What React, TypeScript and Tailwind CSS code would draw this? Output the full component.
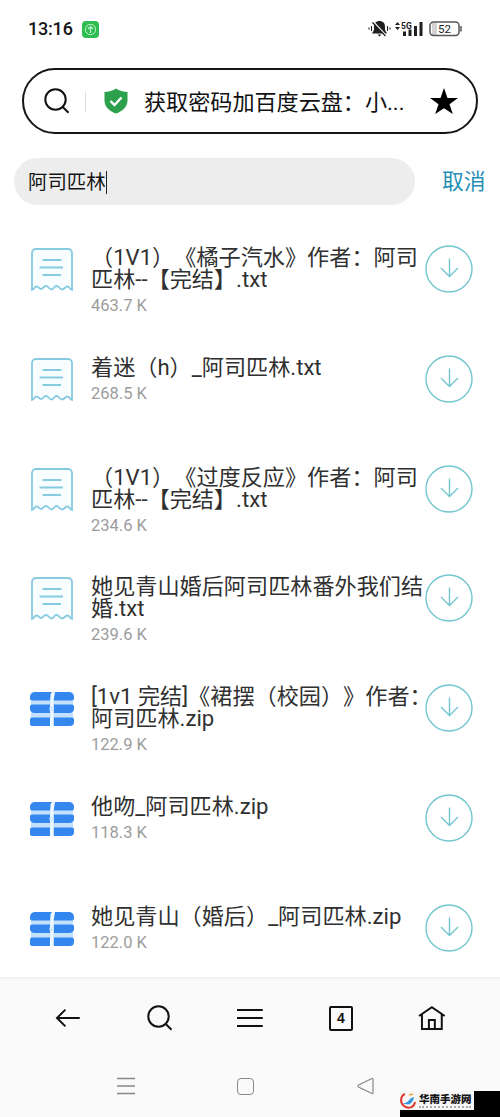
import { FC } from "react";

type FileItem = {
  lines: string[];
  size: string;
  kind: "txt" | "zip";
};

const files: FileItem[] = [
  {
    lines: ["（1V1）《橘子汽水》作者：阿司", "匹林--【完结】.txt"],
    size: "463.7 K",
    kind: "txt",
  },
  { lines: ["着迷（h）_阿司匹林.txt"], size: "268.5 K", kind: "txt" },
  {
    lines: ["（1V1）《过度反应》作者：阿司", "匹林--【完结】.txt"],
    size: "234.6 K",
    kind: "txt",
  },
  {
    lines: ["她见青山婚后阿司匹林番外我们结", "婚.txt"],
    size: "239.6 K",
    kind: "txt",
  },
  {
    lines: ["[1v1 完结]《裙摆（校园）》作者：", "阿司匹林.zip"],
    size: "122.9 K",
    kind: "zip",
  },
  { lines: ["他吻_阿司匹林.zip"], size: "118.3 K", kind: "zip" },
  { lines: ["她见青山（婚后）_阿司匹林.zip"], size: "122.0 K", kind: "zip" },
];

const SearchIcon: FC = () => (
  <svg width="26" height="26" viewBox="0 0 26 26" fill="none" stroke="#111" strokeWidth="2">
    <circle cx="11.5" cy="11.5" r="10.2" />
    <path d="M18.5 18.8l6 6" />
  </svg>
);

const TxtIcon: FC = () => (
  <svg width="42" height="44" viewBox="0 0 42 44" fill="none" stroke="#86cbe0" strokeWidth="1.8">
    <path
      d="M1 42V5a4 4 0 0 1 4-4h32a4 4 0 0 1 4 4v37c-2-.5-2.500-3.500-4.500-3.500-2.500 0-3 3-5.500 3s-3-3.500-5.500-3.500-2.500 3.500-5 3.500-3-3.500-5.500-3.500-3 3-5 3S8 38.500 5.500 38.500C3.500 38.500 3 41.500 1 42z"
      fill="#f8feff"
    />
    <path d="M11.500 12h19M8.500 19.500h23.500M11.500 27h18.500" />
  </svg>
);

const ZipIcon: FC = () => (
  <svg width="46" height="36" viewBox="0 0 46 36">
    <path d="M2 8h42v6H2zM2 21h42v6H2z" fill="#c3e1fc" />
    <g fill="#3587f0">
      <path d="M5 1h18l-2 8.500H3Q1 9.500 1 7.500V6Q1 2 5 1zM26 1h15q4 1 4 5v1.500q0 2-2 2H24.500z" />
      <path d="M3 13.500h18V22H5q-4-1-4-4v-2.500q0-2 2-2zM24.500 13.500H43q2 0 2 2V18q0 3-4 4H24.500z" />
      <path d="M3 26.500h18V35H3q-2 0-2-2v-4.500q0-2 2-2zM24.500 26.500H43q2 0 2 2V31q0 4-4 4H24.500z" />
    </g>
    <path d="M24 0l-2.500 3v33h3V3l1-3z" fill="#eef8ff" />
    <circle cx="22.700" cy="18" r="2.400" fill="#d3eaff" />
  </svg>
);

const DownloadIcon: FC = () => (
  <svg width="48" height="48" viewBox="0 0 48 48" fill="none" stroke="#73c6d0" strokeWidth="1.400">
    <circle cx="24" cy="24" r="23" />
    <path d="M24.500 13.500v18M16 23l8.500 8.500L33 23" />
  </svg>
);

const StatusBar: FC = () => (
  <header className="flex h-[68px] items-start justify-between pt-[19px] pr-[38px] pl-7">
    <div className="flex h-5 items-center gap-[10px]">
      <span className="w-[44px] text-[18px] font-medium leading-5 tracking-[-0.2px] whitespace-nowrap">13:16</span>
      <svg width="17" height="17" viewBox="0 0 17 17" fill="none">
        <rect width="17" height="17" rx="4" fill="#2fbd52" />
        <circle cx="8.500" cy="8.500" r="5.200" stroke="#c4f3cf" />
        <path d="M8.500 12V6M6 8l2.500-2.500L11 8" stroke="#c4f3cf" strokeWidth="1.200" />
      </svg>
    </div>

    <div className="flex h-5 items-center">
      <svg width="23" height="16" viewBox="0 0 23 16" fill="#202020">
        <path d="M11.500 0c3.600 0 5.500 2.300 5.500 5.500V9l2 3.500H4L6 9V5.500C6 2.300 7.900 0 11.500 0zM9.500 13.500h4l-2 2z" />
        <path d="M5.500 1l13 14" stroke="#fff" strokeWidth="1.800" />
        <path d="M4.500 1.500l13 13.500" stroke="#202020" strokeWidth="1.300" />
        <path d="M1 6.500v2M3.500 5v5M19.500 5v5M22 6.500v2" stroke="#202020" strokeWidth="1.100" />
      </svg>
      <svg className="ml-[4px]" width="28" height="16" viewBox="0 0 28 16" fill="#202020">
        <path d="M0 4l2.500-3L5 4zM0 6h5L2.500 9z" />
        <text x="6" y="7.600" fontFamily="Roboto, sans-serif" fontSize="8.500" fontWeight="700">
          5G
        </text>
        <path d="M8 10.500h3V15H8zM13.500 8.500h3V15h-3zM19 5h3v10h-3zM24.500 1h3v14h-3z" />
      </svg>
      <svg className="ml-[6px]" width="33" height="16" viewBox="0 0 33 16" fill="none">
        <path d="M3 2h5v12H3z" fill="#d3d3d3" />
        <rect x="1" y="1" width="29" height="13.500" rx="3.500" stroke="#555" strokeWidth="1.500" />
        <path d="M32 5v5.500" stroke="#555" strokeWidth="1.500" />
        <text x="9" y="12" fontFamily="Roboto, sans-serif" fontSize="11.500" fill="#222">
          52
        </text>
      </svg>
    </div>
  </header>
);

const AddressBar: FC = () => (
  <div className="mr-[22px] ml-[22px] flex h-[66px] items-center rounded-full border-2 border-[#151515] pr-[18px] pl-5">
    <SearchIcon />
    <span className="ml-[15px] h-[21px] w-px bg-[#dedede]" />
    <svg className="ml-[18px]" width="24" height="26" viewBox="0 0 24 26" fill="none">
      <path d="M12 .5q5 3.300 11.500 3.500v8.500C23.500 19 18 23.500 12 25.500 6 23.500.5 19 .5 12.500V4Q7 3.800 12 .5z" fill="#2ca04c" />
      <path d="M6.500 13l4 4 7-7.500" stroke="#fff" strokeWidth="2.400" />
    </svg>
    <span className="ml-4 w-[270px] pt-[2px] text-[22.100px] leading-7 whitespace-nowrap text-[#111]">
      获取密码加百度云盘：小...
    </span>
    <svg className="ml-auto shrink-0" width="28" height="27" viewBox="0 0 28 27">
      <path d="M14 0l3.500 10H28l-8.500 6.200L22.800 26 14 20.200 5.200 26l3.300-9.800L0 10h10.500z" fill="#000" />
    </svg>
  </div>
);

const FileRow: FC<{ item: FileItem }> = ({ item }) => (
  <li className="flex h-[109.800px] items-start">
    <div className="flex h-12 w-[60px] shrink-0 items-center pt-[2px]">
      {item.kind === "txt" ? (
        <span className="ml-[2px]">
          <TxtIcon />
        </span>
      ) : (
        <ZipIcon />
      )}
    </div>
    <div className="ml-[2px] w-[334px] shrink-0">
      <p className="pt-px text-[22.150px] leading-[22px] whitespace-nowrap text-[#303030]">
        {item.lines.map((line) => (
          <span key={line} className="block">
            {line}
          </span>
        ))}
      </p>
      <p className="mt-[6px] text-[16.500px] leading-5 text-[#9c9c9c]">{item.size}</p>
    </div>
    <DownloadIcon />
  </li>
);

const BottomBar: FC = () => (
  <nav className="flex h-20 items-center border-t-2 border-[#f2f2f2] pr-[54px] pl-[55px]">
    <svg width="26" height="20" viewBox="0 0 26 20" fill="none" stroke="#111" strokeWidth="2">
      <path d="M25 10H2M10.500 1.500L2 10l8.500 8.500" />
    </svg>
    <span className="ml-[66px]">
      <SearchIcon />
    </span>
    <svg className="ml-[64px]" width="26" height="20" viewBox="0 0 26 20" stroke="#111" strokeWidth="2">
      <path d="M0 2h26M0 10h26M0 18h26" />
    </svg>
    <span className="ml-[66px] flex size-[25px] items-center justify-center rounded-[2px] border-2 border-[#111] font-['Liberation_Sans',sans-serif] text-[14px] font-bold text-[#111]">
      4
    </span>
    <svg className="ml-[65px]" width="28" height="26" viewBox="0 0 28 26" fill="none" stroke="#111" strokeWidth="2">
      <path d="M1 11L14 2l13 9M4 9v15h20V9M11 24v-9h6v9" />
    </svg>
  </nav>
);

const App: FC = () => {
  return (
    <div className="flex h-[1117px] w-[500px] flex-col overflow-hidden bg-white font-['Roboto','Noto_Sans_CJK_SC',sans-serif] text-[#151515] [text-spacing-trim:space-all]">
      <StatusBar />
      <AddressBar />

      <div className="mt-6 flex h-[47px] shrink-0 items-center pl-[14px]">
        <div className="flex h-full w-[401px] items-center rounded-full bg-[#ededed] pt-[2px] pl-[14px]">
          <span className="text-[19.400px] leading-6">阿司匹林</span>
          <span className="h-[23px] w-[1.500px] bg-[#222]" />
        </div>
        <button className="ml-[27px] pt-px text-[21.800px] leading-7 text-[#278fb5]">取消</button>
      </div>

      <ul className="h-[772px] shrink-0 overflow-hidden pt-[40px] pl-[29px]">
        {files.map((item) => (
          <FileRow key={item.size} item={item} />
        ))}
      </ul>

      <footer className="relative flex-1 bg-[#fafafa]">
        <BottomBar />
        <div className="flex items-center pt-[20px] pl-[117px] text-[#888]">
          <svg width="18" height="18" viewBox="0 0 18 18" stroke="currentColor" strokeWidth="1.300">
            <path d="M0 1.500h18M0 9h18M0 16.500h18" />
          </svg>
          <span className="ml-[102px] size-[17px] rounded-[4px] border border-[#888]" />
          <svg className="ml-[103px]" width="17" height="18" viewBox="0 0 17 18" fill="none" stroke="currentColor" strokeWidth="1.200">
            <path d="M15 1.500L1.500 8q-1.200 1 0 2L15 16.500q1 .2 1-1v-13q0-1.200-1-1z" />
          </svg>
        </div>

        {/* watermark in the corner */}
        <div className="absolute right-0 bottom-0 h-[26px] w-[100px] bg-black">
          <div className="flex h-[19px] w-[74px] items-center bg-[#f6f6f6]">
            <svg width="17" height="17" viewBox="0 0 17 17" fill="none">
              <path d="M5 2C0 4 0 11 4 14s10 2 11-4" stroke="#dc3b2d" strokeWidth="2" />
              <path d="M3 11c5 1 6-5 11-6-1 5-4 10-11 6z" fill="#3293dd" />
              <path d="M9 3l4-1" stroke="#f0a140" strokeWidth="1.500" />
            </svg>
            <div className="ml-[2px] flex flex-col">
              <span className="text-[10.500px] leading-[12px] font-black whitespace-nowrap text-[#151515]">华南手游网</span>
              <span className="w-[52px] border-t-2 border-dotted border-[#aaa]" />
            </div>
          </div>
        </div>
      </footer>
    </div>
  );
};

export default App;
